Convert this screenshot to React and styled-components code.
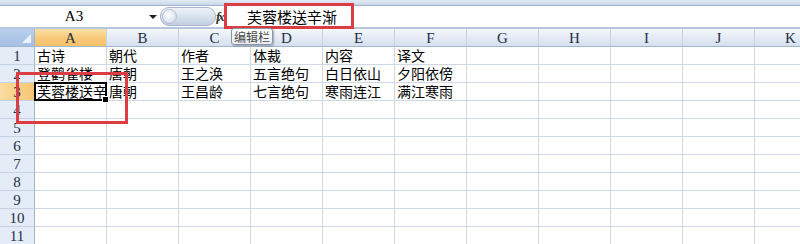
import React from "react";
import styled, { createGlobalStyle } from "styled-components";

const GlobalStyle = createGlobalStyle`
  html, body {
    margin: 0;
    padding: 0;
    background: #ffffff;
    overflow: hidden;
  }
  body {
    font-family: "Noto Sans CJK SC", "Liberation Sans", sans-serif;
  }
`;

const Page = styled.div`
  position: relative;
  width: 800px;
  height: 244px;
  overflow: hidden;
  background: #fff;
`;

const TopStrip = styled.div`
  height: 5px;
  background: linear-gradient(#e3ebf5, #c9d7ea);
  border-bottom: 1px solid #9fb3cf;
`;

const FormulaBar = styled.div`
  display: flex;
  align-items: center;
  height: 21px;
  background: #fff;
  border-bottom: 2px solid #b6c6dc;
`;

const NameBox = styled.div`
  width: 148px;
  text-align: center;
  font-family: "Liberation Serif", serif;
  font-size: 15px;
  color: #000;
  line-height: 21px;
`;

const DropArrow = styled.div`
  width: 0;
  height: 0;
  margin-left: 1px;
  border-left: 4px solid transparent;
  border-right: 4px solid transparent;
  border-top: 4px solid #222;
`;

const Pill = styled.div`
  position: relative;
  margin-left: 3px;
  width: 54px;
  height: 17px;
  border: 1px solid #a8b7cb;
  border-radius: 9px;
  background: linear-gradient(#eef3f9, #d6e0ec 55%, #c2cfe0);
`;

const Knob = styled.div`
  position: absolute;
  left: 1px;
  top: 1px;
  width: 13px;
  height: 13px;
  border-radius: 50%;
  border: 1px solid #b3c0d1;
  background: radial-gradient(circle at 40% 35%, #ffffff, #dfe6ef 60%, #bac7d8);
`;

const Fx = styled.div`
  margin-left: 0;
  width: 8px;
  font-family: "Liberation Serif", serif;
  font-style: italic;
  font-weight: bold;
  font-size: 13px;
  color: #333;
  letter-spacing: -2px;
`;

const FormulaText = styled.div`
  margin-left: 23px;
  font-size: 15px;
  line-height: 21px;
  color: #000;
  white-space: nowrap;
`;

const Grid = styled.div`
  display: grid;
  grid-template-columns: 35px repeat(11, 72px);
  grid-auto-rows: 18px;
`;

const Corner = styled.div`
  position: relative;
  box-sizing: border-box;
  border-right: 1px solid #9eb6ce;
  border-bottom: 1px solid #9eb6ce;
  background: linear-gradient(#b9cfec, #a6c0e4);
  &::after {
    content: "";
    position: absolute;
    right: 3px;
    bottom: 3px;
    border-left: 9px solid transparent;
    border-bottom: 9px solid #eef3fa;
  }
`;

const ColHead = styled.div`
  box-sizing: border-box;
  border-right: 1px solid #c5d2e3;
  border-bottom: 1px solid #9eb6ce;
  background: ${(p) =>
    p.$active
      ? "linear-gradient(#fbe0a6, #f8c978 55%, #f6c06a)"
      : "linear-gradient(#f4f7fb, #e3eaf4 55%, #d6e0ee)"};
  font-family: "Liberation Serif", serif;
  font-size: 15px;
  line-height: 18px;
  text-align: center;
  color: #1f2f45;
`;

const RowHead = styled.div`
  box-sizing: border-box;
  border-right: 1px solid #9eb6ce;
  border-bottom: 1px solid #c5d2e3;
  background: ${(p) =>
    p.$active ? "linear-gradient(90deg, #fbdca0, #f7c673)" : "#e4ecf7"};
  font-family: "Liberation Serif", serif;
  font-size: 15px;
  line-height: 18px;
  text-align: center;
  color: #1f2f45;
`;

const Cell = styled.div`
  position: relative;
  box-sizing: border-box;
  border-right: 1px solid #d0d7e5;
  border-bottom: 1px solid #d0d7e5;
  font-size: 14px;
  line-height: 17px;
  padding-left: 2px;
  color: #000;
  white-space: nowrap;
  overflow: hidden;
`;

const Selected = styled.div`
  position: absolute;
  left: 34px;
  top: 82px;
  width: 73px;
  height: 19px;
  box-sizing: border-box;
  border: 2px solid #000;
  pointer-events: none;
  &::after {
    content: "";
    position: absolute;
    right: -4px;
    bottom: -4px;
    width: 5px;
    height: 5px;
    background: #000;
    border: 1px solid #fff;
  }
`;

const Mark = styled.div`
  position: absolute;
  box-sizing: border-box;
  border: 3px solid #dc3d45;
`;

const Tooltip = styled.div`
  position: absolute;
  left: 231px;
  top: 28px;
  height: 15px;
  padding: 0 2px;
  border: 1px solid #8a96a6;
  border-radius: 3px;
  background: linear-gradient(#ffffff, #e7ebf1);
  box-shadow: 1px 1px 2px rgba(0, 0, 0, 0.3);
  font-size: 12px;
  line-height: 15px;
  color: #4c4c4c;
`;

const columns = ["A", "B", "C", "D", "E", "F", "G", "H", "I", "J", "K"];

const data = [
  ["古诗", "朝代", "作者", "体裁", "内容", "译文"],
  ["登鹳雀楼", "唐朝", "王之涣", "五言绝句", "白日依山", "夕阳依傍"],
  ["芙蓉楼送辛渐", "唐朝", "王昌龄", "七言绝句", "寒雨连江", "满江寒雨"],
];

const App = () => {
  const rows = Array.from({ length: 11 }, (_, i) => i + 1);

  return (
    <Page>
      <GlobalStyle />
      <TopStrip />
      <FormulaBar>
        <NameBox>A3</NameBox>
        <DropArrow />
        <Pill>
          <Knob />
        </Pill>
        <Fx>fx</Fx>
        <FormulaText>芙蓉楼送辛渐</FormulaText>
      </FormulaBar>
      <Grid>
        <Corner />
        {columns.map((c) => (
          <ColHead key={c} $active={c === "A"}>
            {c}
          </ColHead>
        ))}
        {rows.map((r) => (
          <React.Fragment key={r}>
            <RowHead $active={r === 3}>{r}</RowHead>
            {columns.map((c, ci) => (
              <Cell key={c}>{(data[r - 1] && data[r - 1][ci]) || ""}</Cell>
            ))}
          </React.Fragment>
        ))}
      </Grid>
      <Selected />
      <Mark style={{ left: 224, top: 3, width: 130, height: 26 }} />
      <Mark style={{ left: 16, top: 72, width: 112, height: 52 }} />
      <Tooltip>编辑栏</Tooltip>
    </Page>
  );
};

export default App;
